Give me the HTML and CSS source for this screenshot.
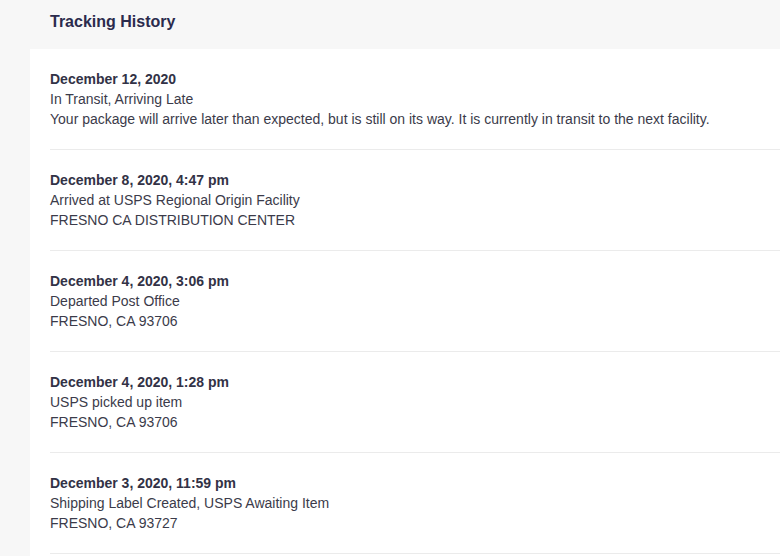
FILE: index.html
```html
<!DOCTYPE html>
<html lang="en">
<head>
  <meta charset="UTF-8">
  <meta name="viewport" content="width=device-width, initial-scale=1.0">
  <title>Tracking History</title>
  <link rel="stylesheet" href="styles.css">
</head>
<body>
  <div class="tracking">
    <header class="tracking-header">Tracking History</header>
    <ul class="tracking-list">
      <li class="tracking-item">
        <div class="item-date">December 12, 2020</div>
        <div class="item-status">In Transit, Arriving Late</div>
        <div class="item-detail">Your package will arrive later than expected, but is still on its way. It is currently in transit to the next facility.</div>
      </li>
      <li class="tracking-item">
        <div class="item-date">December 8, 2020, 4:47 pm</div>
        <div class="item-status">Arrived at USPS Regional Origin Facility</div>
        <div class="item-detail">FRESNO CA DISTRIBUTION CENTER</div>
      </li>
      <li class="tracking-item">
        <div class="item-date">December 4, 2020, 3:06 pm</div>
        <div class="item-status">Departed Post Office</div>
        <div class="item-detail">FRESNO, CA 93706</div>
      </li>
      <li class="tracking-item">
        <div class="item-date">December 4, 2020, 1:28 pm</div>
        <div class="item-status">USPS picked up item</div>
        <div class="item-detail">FRESNO, CA 93706</div>
      </li>
      <li class="tracking-item">
        <div class="item-date">December 3, 2020, 11:59 pm</div>
        <div class="item-status">Shipping Label Created, USPS Awaiting Item</div>
        <div class="item-detail">FRESNO, CA 93727</div>
      </li>
    </ul>
  </div>
</body>
</html>
```

FILE: styles.css
```css
body, ul, li {
  margin: 0;
  padding: 0;
  box-sizing: border-box;
}
ul, li {
  list-style: none;
}
body {
  background: #f7f7f7;
  font-family: "Liberation Sans", Arial, sans-serif;
  font-size: 14px;
  color: #3b3b4a;
}
.tracking-header {
  height: 49px;
  line-height: 44px;
  padding-left: 50px;
  font-size: 16px;
  font-weight: bold;
  color: #2b2b4d;
}
.tracking-list {
  margin-left: 30px;
  padding-left: 20px;
  background: #fff;
  min-height: 520px;
}
.tracking-item {
  padding: 20px 0;
  line-height: 20px;
  border-bottom: 1px solid #ebebeb;
}
.item-date {
  font-weight: bold;
  color: #323246;
}
```
